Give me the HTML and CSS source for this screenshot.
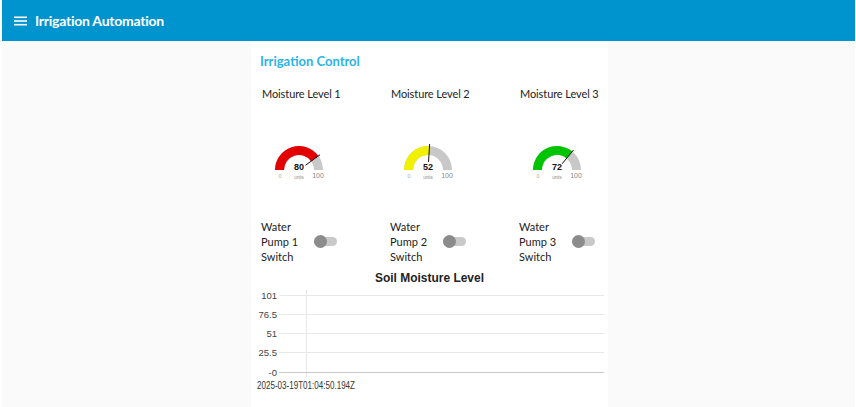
FILE: index.html
```html
<!DOCTYPE html>
<html lang="en">
<head>
<meta charset="utf-8">
<title>Irrigation Automation</title>
<link rel="stylesheet" href="styles.css">
</head>
<body>
<header class="toolbar">
  <svg class="menu-icon" width="13" height="10" viewBox="0 0 13 10" aria-hidden="true">
    <rect x="0" y="0.5" width="13" height="1.6" fill="#fff"/>
    <rect x="0" y="4.2" width="13" height="1.6" fill="#fff"/>
    <rect x="0" y="7.9" width="13" height="1.6" fill="#fff"/>
  </svg>
  <h1 class="app-title">Irrigation Automation</h1>
</header>
<main class="content">
  <section class="group">
    <h2 class="group-title">Irrigation Control</h2>
    <div class="widgets">
      <div class="gauge-cell">
        <div class="widget-label">Moisture Level 1</div>
        <svg class="gauge" width="64" height="46" viewBox="0 0 64 46">
          <path d="M8 32 A24 24 0 0 1 56 32 L47 32 A15 15 0 0 0 17 32 Z" fill="#c8c8c8"/>
          <path d="M8 32 A24 24 0 0 1 51.42 17.89 L44.14 23.18 A15 15 0 0 0 17 32 Z" fill="#e20000"/>
          <line x1="38.47" y1="27.3" x2="53.03" y2="16.72" stroke="#111" stroke-width="1"/>
          <text class="g-val" x="32" y="31.5">80</text>
          <text class="g-unit" x="32" y="40.5">units</text>
          <text class="g-min" x="13" y="40">0</text>
          <text class="g-max" x="51" y="40">100</text>
        </svg>
      </div>
      <div class="gauge-cell">
        <div class="widget-label">Moisture Level 2</div>
        <svg class="gauge" width="64" height="46" viewBox="0 0 64 46">
          <path d="M8 32 A24 24 0 0 1 56 32 L47 32 A15 15 0 0 0 17 32 Z" fill="#c8c8c8"/>
          <path d="M8 32 A24 24 0 0 1 33.51 8.05 L32.94 17.03 A15 15 0 0 0 17 32 Z" fill="#f0f000"/>
          <line x1="32.5" y1="24.02" x2="33.63" y2="6.05" stroke="#111" stroke-width="1"/>
          <text class="g-val" x="32" y="31.5">52</text>
          <text class="g-unit" x="32" y="40.5">units</text>
          <text class="g-min" x="13" y="40">0</text>
          <text class="g-max" x="51" y="40">100</text>
        </svg>
      </div>
      <div class="gauge-cell">
        <div class="widget-label">Moisture Level 3</div>
        <svg class="gauge" width="64" height="46" viewBox="0 0 64 46">
          <path d="M8 32 A24 24 0 0 1 56 32 L47 32 A15 15 0 0 0 17 32 Z" fill="#c8c8c8"/>
          <path d="M8 32 A24 24 0 0 1 47.3 13.51 L41.56 20.44 A15 15 0 0 0 17 32 Z" fill="#00c400"/>
          <line x1="37.1" y1="25.84" x2="48.57" y2="11.97" stroke="#111" stroke-width="1"/>
          <text class="g-val" x="32" y="31.5">72</text>
          <text class="g-unit" x="32" y="40.5">units</text>
          <text class="g-min" x="13" y="40">0</text>
          <text class="g-max" x="51" y="40">100</text>
        </svg>
      </div>

      <div class="switch-cell">
        <span class="switch-label">Water Pump 1 Switch</span>
        <span class="toggle"><span class="toggle-thumb"></span></span>
      </div>
      <div class="switch-cell">
        <span class="switch-label">Water Pump 2 Switch</span>
        <span class="toggle"><span class="toggle-thumb"></span></span>
      </div>
      <div class="switch-cell">
        <span class="switch-label">Water Pump 3 Switch</span>
        <span class="toggle"><span class="toggle-thumb"></span></span>
      </div>
    </div>

    <svg class="chart" width="357" height="130" viewBox="0 0 357 130">
      <text class="chart-title" x="178.5" y="15.5" textLength="109" lengthAdjust="spacingAndGlyphs">Soil Moisture Level</text>
      <g stroke="#e8e8e8" stroke-width="1">
        <line x1="28" y1="29.5" x2="353" y2="29.5"/>
        <line x1="28" y1="48.5" x2="353" y2="48.5"/>
        <line x1="28" y1="67.5" x2="353" y2="67.5"/>
        <line x1="28" y1="86.5" x2="353" y2="86.5"/>
        <line x1="55.5" y1="24" x2="55.5" y2="111"/>
      </g>
      <line x1="28" y1="106.5" x2="353" y2="106.5" stroke="#c9c9c9" stroke-width="1"/>
      <g class="y-labels">
        <text x="26" y="32.5">101</text>
        <text x="26" y="51.5">76.5</text>
        <text x="26" y="70.5">51</text>
        <text x="26" y="89.5">25.5</text>
        <text x="26" y="109.5">-0</text>
      </g>
      <text class="x-label" x="6" y="123" textLength="98" lengthAdjust="spacingAndGlyphs">2025-03-19T01:04:50.194Z</text>
    </svg>
  </section>
</main>
</body>
</html>
```

FILE: styles.css
```css
html {
  background: #ffffff;
  height: 100%;
}

body {
  margin: 0 1px 0 2px;
  min-height: 100%;
  background: #fafafa;
  font-family: "Lato", "Liberation Sans", Arial, sans-serif;
  color: #222;
  overflow: hidden;
}

.toolbar {
  height: 41px;
  background: #0094ce;
  display: flex;
  align-items: center;
  padding-left: 12px;
  box-sizing: border-box;
}

.menu-icon {
  display: block;
  margin-top: 1px;
}

.app-title {
  margin: 0 0 0 8px;
  font-size: 14px;
  font-weight: 700;
  color: #ffffff;
  letter-spacing: -0.25px;
}

.content {
  display: flex;
  height: 366px;
}

.group {
  width: 357px;
  margin-left: 249px;
  background: #ffffff;
  box-sizing: border-box;
}

.group-title {
  margin: 10px 0 0 9px;
  font-size: 13px;
  line-height: 20px;
  font-weight: 700;
  color: #2ab3e8;
}

.widgets {
  display: grid;
  grid-template-columns: 129px 129px 99px;
  margin-top: 15px;
  padding-left: 11px;
}

.widget-label {
  font-size: 11px;
  line-height: 16px;
  letter-spacing: -0.1px;
  white-space: nowrap;
}

.gauge {
  display: block;
  margin: 36px 0 0 5px;
}

.gauge text {
  text-anchor: middle;
  font-family: "Liberation Sans", Arial, sans-serif;
}

.g-val {
  font-size: 9px;
  font-weight: 700;
  fill: #111;
}

.g-unit {
  font-size: 4.5px;
  fill: #888;
}

.g-min {
  font-size: 5.5px;
  fill: #aaa;
}

.g-max {
  font-size: 7px;
  fill: #888;
}

.switch-cell {
  display: flex;
  align-items: center;
  margin: 35px 0 0 -1px;
}

.switch-label {
  width: 50px;
  font-size: 11px;
  line-height: 15px;
}

.toggle {
  position: relative;
  display: block;
  width: 23px;
  height: 9px;
  border-radius: 5px;
  background: #c9c9c9;
  margin-left: 3px;
}

.toggle-thumb {
  position: absolute;
  left: 0;
  top: -2px;
  width: 13px;
  height: 13px;
  border-radius: 50%;
  background: #8c8c8c;
}

.chart {
  display: block;
  margin-top: 2px;
}

.chart-title {
  text-anchor: middle;
  font-family: "Liberation Sans", Arial, sans-serif;
  font-size: 13px;
  font-weight: 700;
  fill: #222;
}

.y-labels text {
  text-anchor: end;
  font-family: "Liberation Sans", Arial, sans-serif;
  font-size: 9.5px;
  fill: #444;
}

.x-label {
  font-family: "Liberation Sans", Arial, sans-serif;
  font-size: 10px;
  fill: #333;
}
```
